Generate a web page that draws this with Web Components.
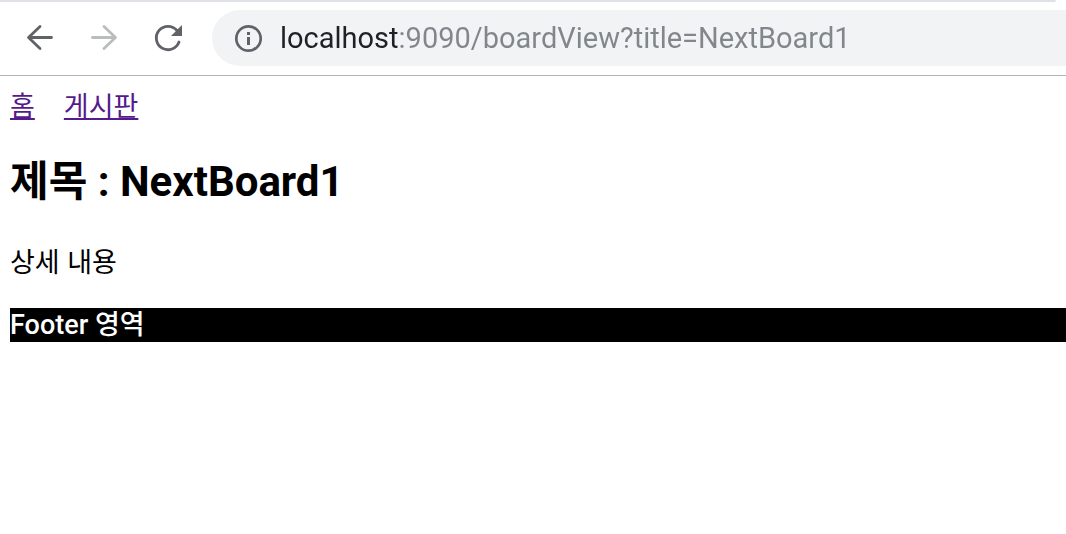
<!DOCTYPE html>
<html lang="ko">
<head>
<meta charset="utf-8">
<title>NextBoard1</title>
<style>
  body { margin: 0; background: #fff; color: #000; font-family: "Noto Sans CJK KR", sans-serif; font-size: 27px; }
</style>
</head>
<body>
<browser-toolbar></browser-toolbar>
<board-page>
  <board-nav slot="nav"></board-nav>
  <board-article heading="제목 : NextBoard1">상세 내용</board-article>
  <board-footer slot="footer">Footer 영역</board-footer>
</board-page>
<script>
  const define = (name, html, setup) => customElements.define(name, class extends HTMLElement {
    connectedCallback() {
      if (this.shadowRoot) return;
      this.attachShadow({ mode: "open" }).innerHTML = html;
      if (setup) setup(this);
    }
  });

  define("tool-button", `
    <style>
      :host { display: block; flex: none; width: 64px; }
      button { display: grid; place-items: center; width: 100%; height: 56px; margin: 0; padding: 0; border: 0; background: none; color: inherit; }
    </style>
    <button type="button"><slot></slot></button>`,
    el => el.shadowRoot.querySelector("button").setAttribute("aria-label", el.getAttribute("label")));

  define("address-bar", `
    <style>
      :host { display: flex; flex: 1; min-width: 0; align-items: center; box-sizing: border-box; height: 56px; padding-left: 20px; gap: 12px; border-radius: 28px 0 0 28px; background: #f1f3f4; color: #5f6368; }
      svg { flex: none; }
      input { flex: 1; min-width: 0; height: 48px; margin: 0; padding: 0; border: 0; outline: 0; font: 29px/48px Roboto, sans-serif;
        color: #80868b; -webkit-text-fill-color: transparent;
        background: linear-gradient(to right, #202124 118px, #80868b 118px); background-clip: text; -webkit-background-clip: text; }
    </style>
    <svg width="36" height="36" viewBox="0 0 36 36" aria-hidden="true">
      <circle cx="16.5" cy="18.5" r="12.2" fill="none" stroke="currentColor" stroke-width="2.7"/>
      <path d="M15 12h3v3h-3zM15 17h3v8h-3z" fill="currentColor"/>
    </svg>
    <input type="text" aria-label="주소" value="localhost:9090/boardView?title=NextBoard1" spellcheck="false">`);

  define("browser-toolbar", `
    <style>
      :host { display: block; border-bottom: 1px solid #b3b3b6; }
      .strip { height: 2px; margin-right: 10px; background: #dee1e6; border-bottom-right-radius: 2px; }
      .bar { display: flex; padding: 8px 0 9px 8px; color: #5f6368; }
      .muted { color: #babcbe; }
      address-bar { margin-left: 12px; }
    </style>
    <div class="strip"></div>
    <div class="bar">
      <tool-button label="뒤로">
        <svg width="32" height="32" viewBox="0 0 32 32" fill="none" stroke="currentColor" stroke-width="2.8" stroke-linecap="round" stroke-linejoin="round"><path d="M27.5 15.5H5M16 4.5L4.5 15.5 16 26.5"/></svg>
      </tool-button>
      <tool-button label="앞으로" class="muted">
        <svg width="32" height="32" viewBox="0 0 32 32" fill="none" stroke="currentColor" stroke-width="2.8" stroke-linecap="round" stroke-linejoin="round"><path d="M4.5 15.5H27M16 4.5L27.5 15.5 16 26.5"/></svg>
      </tool-button>
      <tool-button label="새로고침">
        <svg width="32" height="32" viewBox="0 0 32 32"><path d="M27 20A11.7 11.7 0 1 1 25 8.500" fill="none" stroke="currentColor" stroke-width="2.8" stroke-linecap="round"/><path d="M30 3V14H19Z" fill="currentColor"/></svg>
      </tool-button>
      <address-bar></address-bar>
    </div>`);

  define("board-nav", `
    <style>
      :host { display: block; }
      nav { display: flex; gap: 29px; line-height: 34px; }
      a { color: #551a8b; text-decoration: underline; text-decoration-thickness: 2px; text-underline-offset: 2px; }
    </style>
    <nav><a href="#home">홈</a><a href="#board">게시판</a></nav>`);

  define("board-article", `
    <style>
      :host { display: block; }
      h2 { margin: 32px 0 34px; font-family: Roboto, "Noto Sans CJK KR", sans-serif; font-size: 42px; line-height: 56px; font-weight: 700; }
      p { margin: 0 0 30px; line-height: 34px; }
    </style>
    <h2></h2><p><slot></slot></p>`,
    el => { el.shadowRoot.querySelector("h2").textContent = el.getAttribute("heading"); });

  define("board-footer", `
    <style>
      :host { display: block; }
      footer { background: #000; color: #fff; font-family: Roboto, "Noto Sans CJK KR", sans-serif; line-height: 34px; font-weight: 500; }
    </style>
    <footer><slot></slot></footer>`);

  define("board-page", `
    <style>
      :host { display: block; padding: 12px 0 0 10px; }
    </style>
    <slot name="nav"></slot>
    <main><slot></slot></main>
    <slot name="footer"></slot>`);
</script>
</body>
</html>
